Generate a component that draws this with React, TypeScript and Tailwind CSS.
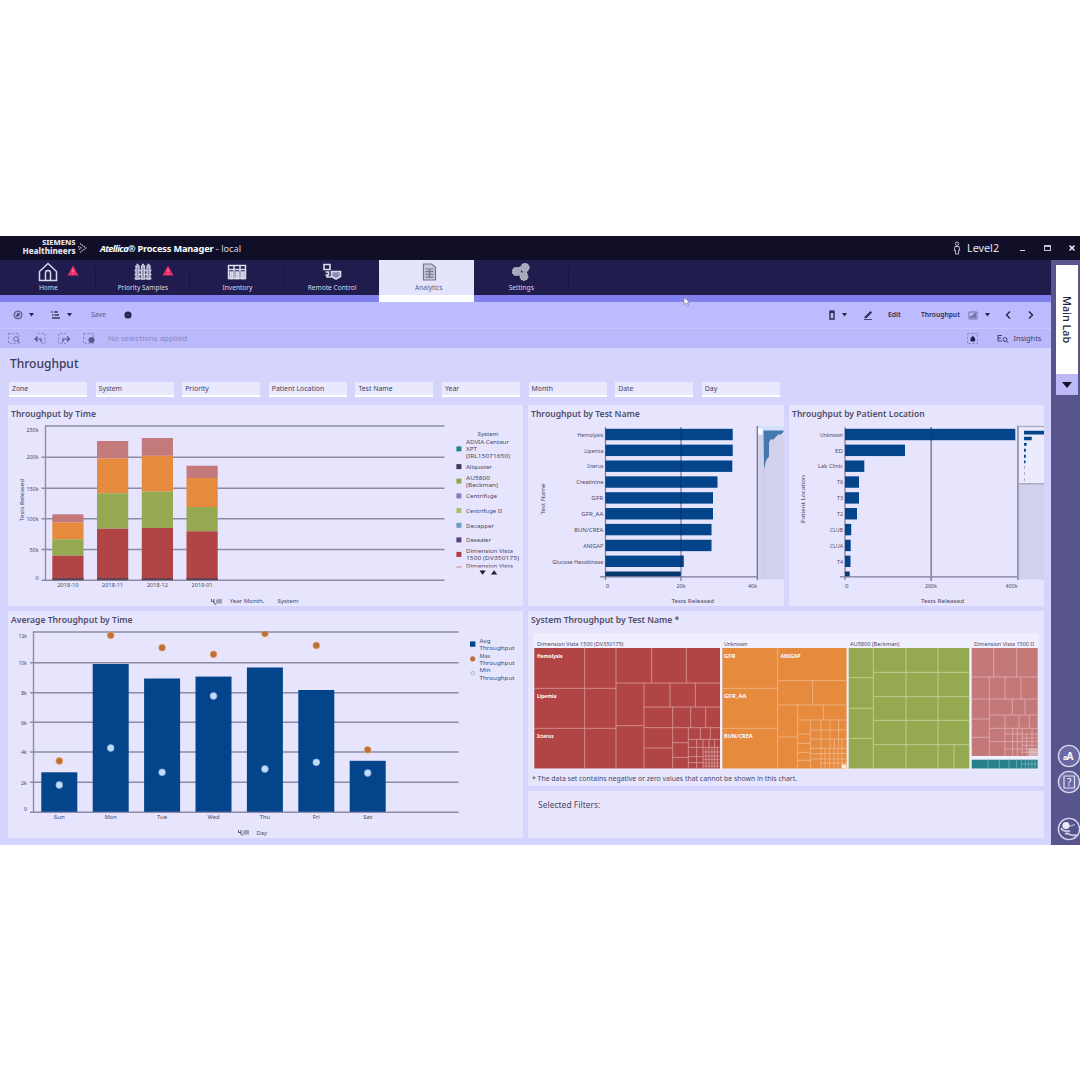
import React from "react";

const NAVY = "#04448a";
const INK = "#4a4865";

type LabelProps = {
  x: number;
  y: number;
  w?: number;
  size?: number;
  anchor?: "start" | "middle" | "end";
  fill?: string;
  weight?: number;
  rotate?: boolean;
  children: string;
};

function Label({ x, y, w, size = 5.6, anchor = "start", fill = INK, weight = 400, rotate, children }: LabelProps) {
  return (
    <text
      x={x}
      y={y}
      fontSize={size}
      textAnchor={anchor}
      fill={fill}
      fontWeight={weight}
      textLength={w}
      lengthAdjust="spacingAndGlyphs"
      transform={rotate ? `rotate(-90 ${x} ${y})` : undefined}
    >
      {children}
    </text>
  );
}

function Panel({ title, className, children }: { title?: string; className: string; children: React.ReactNode }) {
  return (
    <section className={`flex flex-col overflow-hidden bg-[#e6e5fd] ${className}`}>
      {title && (
        <h2 className="h-[18px] shrink-0 whitespace-nowrap pl-[3px] text-[8.6px] leading-[18.6px] font-semibold text-[#504e6a]">{title}</h2>
      )}
      {children}
    </section>
  );
}

/* ---------- Charts ---------- */

const stacks = [
  { x: 52.3, label: "2018-10", cuts: [514.3, 522.5, 539.3, 555.7] },
  { x: 97, label: "2018-11", cuts: [441, 458.5, 493.3, 528.7] },
  { x: 141.8, label: "2018-12", cuts: [438, 455.8, 491.5, 528] },
  { x: 186.5, label: "2019-01", cuts: [465.7, 478, 507, 531.3] },
];
const stackColors = ["#c47a7a", "#e68a3e", "#95aa50", "#b14545"];

const systemLegend: { y: number; color: string; lines: [string, number, number][] }[] = [
  { y: 448.8, color: "#2a8089", lines: [["ADVIA Centaur", 444.4, 43], ["XPT", 451.3, 11], ["(IRL15071650)", 458.2, 44]] },
  { y: 466.5, color: "#45355e", lines: [["Aliquoter", 468.9, 26]] },
  { y: 481, color: "#92aa4c", lines: [["AU5800", 480, 24], ["(Beckman)", 486.9, 32]] },
  { y: 495.8, color: "#9278bb", lines: [["Centrifuge", 498.2, 31]] },
  { y: 510.5, color: "#a2c267", lines: [["Centrifuge II", 512.9, 36]] },
  { y: 525.2, color: "#6d98c6", lines: [["Decapper", 527.6, 28]] },
  { y: 539.8, color: "#5b3e7c", lines: [["Desealer", 542.2, 25]] },
  { y: 554.3, color: "#b23b40", lines: [["Dimension Vista", 553.4, 47], ["1500 (DV350175)", 560.4, 53]] },
];

function ThroughputByTime() {
  const grid = [426, 457.2, 488.3, 518.8, 549.5, 580.3];
  const ticks = ["250k", "200k", "150k", "100k", "50k", "0"];
  return (
    <svg viewBox="8 423 515 183" className="h-[183px] w-[515px]">
      {grid.map((y, i) => (
        <g key={y}>
          <path d={`M${i ? 41.5 : 45} ${y}H444.5`} stroke="#8d8ba5" strokeWidth="1.4" />
          <Label x={38.5} y={i === 0 ? 432 : i === 5 ? 579.5 : y + 2.2} anchor="end" w={[12, 12, 12, 12, 9, 3][i]}>{ticks[i]}</Label>
        </g>
      ))}
      <path d="M45.5 425.5V580.5" stroke="#8d8ba5" strokeWidth="1.4" />
      {stacks.map((s) => (
        <g key={s.x}>
          {s.cuts.map((c, i) => (
            <rect key={c} x={s.x} y={c} width={31.2} height={(s.cuts[i + 1] ?? 580) - c} fill={stackColors[i]} />
          ))}
          <rect x={s.x} y={578} width={31.2} height={2.2} fill="#624454" />
          <Label x={s.x + 15.6} y={587.2} anchor="middle" w={21}>{s.label}</Label>
        </g>
      ))}
      <Label x={23.5} y={521} w={42} rotate>Tests Released</Label>
      <path d="M211.500 599v2.500h2.500M214 599v4.500l2 .8M217 599.5v4M219 599v4.500M221 599v4.500" stroke={INK} strokeWidth="0.9" fill="none" />
      <Label x={229.5} y={603.2} w={35}>Year Month,</Label>
      <Label x={277.5} y={603.2} w={21}>System</Label>
      <Label x={477.5} y={435.6} w={21}>System</Label>
      {systemLegend.map((l) => (
        <g key={l.y}>
          <rect x={456.4} y={l.y - 2.4} width={5} height={5} fill={l.color} />
          {l.lines.map(([t, y, w]) => (
            <Label key={t} x={466} y={y} w={w}>{t}</Label>
          ))}
        </g>
      ))}
      <path d="M456.5 567h5" stroke="#d08a92" strokeWidth="1.2" />
      <svg x="466" y="562.5" width="50" height="5" viewBox="466 562.5 50 5">
        <Label x={466} y={567.8} w={47}>Dimension Vista</Label>
      </svg>
      <path d="M479.5 570.5h6.2l-3.1 4.2zM491 574.5h6.2l-3.1-4.2z" fill="#1c1a35" />
    </svg>
  );
}

const days = [
  { d: "Sun", w: 11, top: 772.3, max: 761, min: 785 },
  { d: "Mon", w: 12, top: 664, max: 635.3, min: 748 },
  { d: "Tue", w: 10, top: 678.5, max: 647.7, min: 772.3 },
  { d: "Wed", w: 12, top: 676.6, max: 654.3, min: 696 },
  { d: "Thu", w: 10.5, top: 667.5, max: 633.5, min: 769 },
  { d: "Fri", w: 7, top: 690, max: 645.5, min: 762.3 },
  { d: "Sat", w: 9, top: 760.8, max: 749.8, min: 773 },
];

function AverageByTime() {
  const grid = [632, 662.7, 692.7, 722.3, 752, 782.3, 812.2];
  const ticks = ["12k", "10k", "8k", "6k", "4k", "2k", "0"];
  return (
    <svg viewBox="8 629 515 209" className="h-[209px] w-[515px]">
      <defs>
        <clipPath id="plot"><rect x="30" y="631.6" width="430" height="181" /></clipPath>
      </defs>
      {grid.map((y, i) => (
        <g key={y}>
          <path d={`M${i ? 30 : 33} ${y}H458.5`} stroke="#8d8ba5" strokeWidth="1.4" />
          <Label x={27} y={i === 0 ? 638 : i === 6 ? 811 : y + 2.2} anchor="end" w={i < 2 ? 8.5 : i === 6 ? 3 : 6}>{ticks[i]}</Label>
        </g>
      ))}
      <path d="M33.5 631.5V812.5" stroke="#8d8ba5" strokeWidth="1.4" />
      {days.map((b, i) => {
        const x = 41.3 + i * 51.4;
        return (
          <g key={b.d}>
            <rect x={x} y={b.top} width={36} height={811.8 - b.top} fill={NAVY} />
            <g clipPath="url(#plot)">
              <circle cx={x + 18} cy={b.max} r={3.4} fill="#b9713a" stroke="#eba864" strokeWidth="0.7" />
            </g>
            <circle cx={x + 18} cy={b.min} r={3.4} fill="#c4dcf8" stroke="#7fb0e8" strokeWidth="0.7" />
            <Label x={x + 18} y={819} anchor="middle" w={b.w}>{b.d}</Label>
          </g>
        );
      })}
      <path d="M238.500 830v2.500h2.500M241 830v4.500l2 .8M244 830.500v4M246 830v4.500M248 830v4.500" stroke={INK} strokeWidth="0.9" fill="none" />
      <Label x={256.5} y={834.5} w={10.5}>Day</Label>
      <rect x={470} y={641.4} width={5.4} height={5.4} fill={NAVY} />
      <circle cx={472.7} cy={658.8} r={2.6} fill="#b9713a" />
      <circle cx={472.7} cy={673.2} r={1.8} fill="#d5e4f8" stroke="#98a3c0" strokeWidth="0.7" />
      {["Avg", "Max", "Min"].map((t, i) => (
        <g key={t}>
          <Label x={479.5} y={643.1 + i * 14.6} w={11}>{t}</Label>
          <Label x={479.5} y={650.3 + i * 14.6} w={35}>Throughput</Label>
        </g>
      ))}
    </svg>
  );
}

const tests: [string, number, number][] = [
  ["Hemolysis", 732.7, 26],
  ["Lipemia", 732.7, 19],
  ["Icterus", 732.3, 16],
  ["Creatinine", 717.5, 27],
  ["GFR", 713, 12],
  ["GFR_AA", 713, 22],
  ["BUN/CREA", 711.5, 29],
  ["ANIGAP", 711.5, 20],
  ["Glucose Hexokinase", 683.8, 51],
];

function ByTestName() {
  return (
    <svg viewBox="528 423 256 183" className="h-[183px] w-[256px]">
      <path d="M605.5 427V580M681 427V581M600 576.8H758" stroke="#7c7a98" strokeWidth="1.2" />
      {tests.map(([t, x, w], i) => (
        <g key={t}>
          <rect x={605.3} y={428.8 + i * 15.85} width={x - 605.3} height={11.4} fill={NAVY} />
          <path d={`M681 ${428.8 + i * 15.85}v11.4`} stroke="#0c2c62" strokeWidth="0.8" />
          <Label x={603.3} y={436.7 + i * 15.85} anchor="end" w={w}>{t}</Label>
        </g>
      ))}
      <rect x={605.3} y={571.5} width={75.5} height={4.8} fill="#04386f" />
      <path d="M757.4 426V580" stroke="#7c7a98" strokeWidth="1.6" />
      <rect x={758.2} y={426} width={25.6} height={153.5} fill="#d2d1eb" />
      <rect x={758.2} y={426} width={25.6} height={9} fill="#d3e2f8" />
      <rect x={758.2} y={428.5} width={4} height={6} fill="#fff" />
      <path d="M763.5 430.5h20v1.5l-2.5 2.5h-3l-4.5 5h-3l-1.5 3v14l-3 4-2 9z" fill="#4578ae" />
      <path d="M763.5 468V578" stroke="#c6c5dd" strokeWidth="0.8" />
      <Label x={607.5} y={587.6} anchor="middle" w={3.5}>0</Label>
      <Label x={681} y={587.6} anchor="middle" w={9}>20k</Label>
      <Label x={752.5} y={587.6} anchor="middle" w={9}>40k</Label>
      <Label x={544.5} y={514.5} w={31} rotate>Test Name</Label>
      <Label x={671.5} y={603} w={42.5}>Tests Released</Label>
    </svg>
  );
}

const places: [string, number, number][] = [
  ["Unknown", 1015.3, 23],
  ["ED", 905, 8],
  ["Lab Clinic", 864.3, 25],
  ["T6", 859, 6],
  ["T3", 859, 6],
  ["T2", 857, 6],
  ["CLUB", 851.2, 13],
  ["CLUA", 850.7, 13],
  ["T4", 850.5, 6],
];

function ByPatientLocation() {
  return (
    <svg viewBox="789 423 255 183" className="h-[183px] w-[255px]">
      <path d="M845 427V580M840 576.8H1018" stroke="#7c7a98" strokeWidth="1.2" />
      <path d="M931.2 427V581" stroke="#8d8ba5" strokeWidth="1.8" />
      {places.map(([t, x, w], i) => (
        <g key={t}>
          <rect x={845} y={428.8 + i * 15.85} width={x - 845} height={11.4} fill={NAVY} />
          <Label x={843} y={436.7 + i * 15.85} anchor="end" w={w}>{t}</Label>
        </g>
      ))}
      <path d="M931.200 428.800v11.400" stroke="#0c3a76" strokeWidth="1" />
      <rect x={845} y={571.5} width={4.7} height={4.8} fill="#04386f" />
      <path d="M1018 425.5V580" stroke="#8d8ba5" strokeWidth="1.8" />
      <rect x={1018.8} y={425.5} width={25.2} height={58.5} fill="#ecebfd" />
      <rect x={1018.8} y={484} width={25.2} height={95.5} fill="#d2d1eb" />
      <path d="M1018 426.5h26M1018 483.8h26" stroke="#acaac6" strokeWidth="1.4" />
      <path d="M1024 430.8h20v3.6h-20zM1024 436.8h7.7v3.4h-7.7zM1024 443h2.6v2.8h-2.6zM1024 448.8h1.8v3h-1.8zM1024 454.8h1.8v3h-1.8zM1024 460.6h1.5v2.6h-1.5z" fill={NAVY} />
      <path d="M1024.5 466v16" stroke="#a9a8cc" strokeWidth="0.9" strokeDasharray="3 3" />
      <Label x={846.8} y={587.6} anchor="middle" w={3.5}>0</Label>
      <Label x={931} y={587.6} anchor="middle" w={12}>200k</Label>
      <Label x={1011.5} y={587.6} anchor="middle" w={12}>400k</Label>
      <Label x={805} y={523} w={48} rotate>Patient Location</Label>
      <Label x={921} y={603} w={43}>Tests Released</Label>
    </svg>
  );
}

/* Cell borders are laid out in thirds of a pixel from each group's origin. */
function Treemap() {
  return (
    <svg viewBox="528 629 516 157" className="h-[157px] w-[516px]">
      <rect x={533.5} y={633.5} width={505} height={136} fill="#f0effe" />
      <rect x={534.3} y={648} width={185.7} height={120.5} fill="#b14545" />
      <rect x={722.3} y={648} width={124.3} height={120.5} fill="#e68a3e" />
      <rect x={848.7} y={648} width={120.6} height={120.5} fill="#95aa50" />
      <rect x={971.7} y={648} width={66} height={108} fill="#c47878" />
      <rect x={971.7} y={759.7} width={66} height={8.8} fill="#27818c" />
      <g fill="none" strokeWidth="2.4">
        <g transform="translate(525 605) scale(.33333)">
          <path
            stroke="#d79d9e"
            d="M179 128V490M273 128V490M28 250H273M28 370H273M273 234H585M380 128V234M484 128V234M357 234V490M273 362H357M357 306H585M435 234V306M511 234V306M357 368H585M443 306V490M497 306V368M542 306V368M357 429H443M443 413H490M443 457H490M490 368V490M490 403H585M526 368V403M556 368V403M515 403V490M534 403V490M552 403V490M569 403V490M490 427H585M490 455H534M490 473H534M534 441H585M534 453H585M534 464H585M534 474H585M534 483H585M543 427V490M561 427V490M577 427V490"
          />
        </g>
        <g transform="translate(715 605) scale(.33333)">
          <path
            stroke="#f1bb8b"
            d="M188 128V490M22 250H188M22 370H188M188 227H395M293 227V300M188 300H395M248 300V490M188 396H248M325 300V345M248 345H395M286 345V490M318 345V490M345 345V430M371 345V430M286 375H395M286 402H395M248 387H286M248 415H286M248 442H286M248 466H286M286 430H395M286 446H395M286 462H395M318 474H395M330 430V490M344 430V490M357 430V490M369 430V490M381 402V490M358 402V430"
          />
          <path stroke="#c8d5a0" d="M475 128V490M401 218H475M401 310H475M401 400H475M573 128V490M475 202H763M475 275H763M475 346H763M475 419H763M669 128V490M717 419V490" />
          <path fill="#fdeee0" d="M380 478h14v12h-14z" />
        </g>
        <g transform="translate(900 605) scale(.33333)">
          <path
            stroke="#e0b0b4"
            d="M215 216H413M281 128V216M350 128V216M268 216V453M315 216V282M363 216V282M215 282H413M337 282V330M375 282V330M268 330H413M215 342H268M215 397H268M315 330V453M357 330V370M388 330V370M268 370H413M268 410H315M315 387H413M315 410H413M315 432H413M338 370V453M352 370V453M366 370V453M380 387V453M396 370V453M366 399H413M366 421H413M366 442H413"
          />
          <path fill="#e8cccf" fillOpacity="0.6" d="M385 430h28v23h-28z" />
          <path stroke="#74b3ba" d="M264 464V490M298 464V490M327 464V490M350 464V490M364 464V490M376 464V490M386 464V490M396 464V490M405 464V490M364 477H413" />
        </g>
      </g>
      <Label x={537} y={645.6} w={86.5}>Dimension Vista 1500 (DV350175)</Label>
      <Label x={724} y={645.6} w={23.5}>Unknown</Label>
      <Label x={850} y={645.6} w={49.5}>AU5800 (Beckman)</Label>
      <Label x={974} y={645.6} w={60}>Dimension Vista 1500 II</Label>
      <g>
        <Label x={537} y={657.6} w={25.5} fill="#fff" weight={700}>Hemolysis</Label>
        <Label x={537} y={697.6} w={19.5} fill="#fff" weight={700}>Lipemia</Label>
        <Label x={537} y={738} w={16.5} fill="#fff" weight={700}>Icterus</Label>
        <Label x={724} y={657.6} w={11.5} fill="#fff" weight={700}>GFR</Label>
        <Label x={724} y={697.6} w={22.5} fill="#fff" weight={700}>GFR_AA</Label>
        <Label x={724} y={738} w={28.5} fill="#fff" weight={700}>BUN/CREA</Label>
        <Label x={780.5} y={657.6} w={20} fill="#fff" weight={700}>ANIGAP</Label>
      </g>
      <Label x={532} y={781} w={265} size={7.4}>* The data set contains negative or zero values that cannot be shown in this chart.</Label>
    </svg>
  );
}

/* ---------- Navigation ---------- */

const navIcons: Record<string, React.ReactNode> = {
  Home: <path d="M1.5 9.5 10 1.5l8.5 8v9h-17zM7.5 18.5v-7.5a2.5 2.5 0 0 1 5 0v7.5" fill="none" stroke="#d8d7ea" strokeWidth="1.5" />,
  "Priority Samples": (
    <g fill="none" stroke="#cfcee4" strokeWidth="1.3">
      <path d="M1.5 8.5h17M1.5 12.5h17M1.5 16.5h17" />
      <path d="M3 4h3v13H3zM8.5 4h3v13h-3zM14 4h3v13h-3z" fill="#9694b5" />
      <path d="M3.5 2.5h2M9 2.5h2M14.5 2.5h2" />
    </g>
  ),
  Inventory: (
    <g fill="none" stroke="#dddced" strokeWidth="1.5">
      <path d="M1.500 3.500h17v13h-17zM1.500 7.500h17M7 3.500v13M13 3.500v13" />
      <path d="M3.200 10h2.200v6.500H3.200zM9 10h2.200v6.500H9zM14.800 10H17v6.500h-2.200z" fill="#c3c2da" />
    </g>
  ),
  "Remote Control": (
    <g fill="none" stroke="#dcdbec" strokeWidth="1.6">
      <path d="M2 2.500h6v5H2zM3.500 10h3v3h-3M5 13v2h4" />
      <path d="M9.500 9.500h9v5l-4.500 2.500-4.500-2.500z" fill="#8e8bb2" />
    </g>
  ),
  Analytics: (
    <g stroke="#77758f" strokeWidth="1.2">
      <path d="M4.500 2h8l4 3v13h-12z" fill="#c9c7de" />
      <path d="M6.500 7h8M6.500 9.700h8M6.500 12.400h8M6.500 15.100h8M10.500 7v9" />
    </g>
  ),
  Settings: (
    <g fill="#a9a7bb" stroke="#bebccf" strokeWidth="1.2" strokeDasharray="1.8 0.7">
      <circle cx="5.500" cy="9.500" r="4" />
      <circle cx="14" cy="5.500" r="4" />
      <circle cx="13" cy="14.500" r="3.800" />
      <path d="M6 8l7-3M6 10l7 4M14 6v8" strokeWidth="4" strokeDasharray="none" stroke="#a9a7bb" />
    </g>
  ),
};

function NavTab({ name, alert, active }: { name: string; alert?: boolean; active?: boolean }) {
  return (
    <div
      className={
        "relative flex w-[94.6px] shrink-0 flex-col items-center border-b-[7px] pt-[2px] " +
        (active ? "border-white bg-[#e5e4fd] pl-[4px] text-[#5d5b76]" : "border-[#8180ec] text-[#dddcec]")
      }
    >
      <svg viewBox="0 0 20 20" className="h-[20px] w-[20px]">{navIcons[name]}</svg>
      <span className="text-[6.600px] leading-[11px] whitespace-nowrap">{name}</span>
      {alert && (
        <svg viewBox="0 0 12 11" className="absolute top-[4.500px] right-[16.500px] h-[11px] w-[12px]">
          <path d="M6 .5 11.500 10.500H.5z" fill="#ec2d69" />
          <path d="M6 4v3M6 8v1.200" stroke="#ffb3cb" strokeWidth="0.900" />
        </svg>
      )}
      {!active && <i className="absolute top-[7px] right-0 h-[22px] w-px bg-[#17143f]" />}
    </div>
  );
}

function Caret() {
  return (
    <svg viewBox="0 0 6 4" className="h-[3.500px] w-[5px]">
      <path d="M0 0h6L3 4z" fill="#26244a" />
    </svg>
  );
}

function Toolbar() {
  return (
    <div className="flex h-[26px] items-center bg-[#bcbbfd] text-[#2f2d55]">
      <svg viewBox="0 0 10 10" className="ml-[13px] h-[10px] w-[10px]">
        <circle cx="5" cy="5" r="4" fill="#a3a2e0" stroke="#56547f" />
        <path d="M3 7l1.200-3L7 3 5.800 5.800z" fill="#3a3860" />
      </svg>
      <span className="ml-[6px] flex"><Caret /></span>
      <svg viewBox="0 0 9 8" className="ml-[17px] h-[8px] w-[9px]">
        <path d="M0 1h1.500M3 1h4M1 4h1.500M3.500 4H8M1 7h8" stroke="#3a3860" strokeWidth="1.300" />
      </svg>
      <span className="ml-[7px] flex"><Caret /></span>
      <span className="ml-[19px] w-[16px] text-[6.800px] text-[#5b598a]">Save</span>
      <svg viewBox="0 0 8 8" className="ml-[16.500px] h-[8px] w-[8px]">
        <circle cx="4" cy="4" r="3.600" fill="#25234a" />
        <path d="M1.800 4h4.400" stroke="#5a588c" strokeWidth="0.800" />
      </svg>
      <div className="flex-1" />
      <svg viewBox="0 0 8 10" className="h-[10px] w-[8px]">
        <path d="M2 1.300h4V9H2zM2 2.200h4" fill="none" stroke="#2c2a50" strokeWidth="1.400" />
      </svg>
      <span className="ml-[6px] flex"><Caret /></span>
      <svg viewBox="0 0 10 10" className="ml-[16px] h-[10px] w-[10px]">
        <path d="M1 7.500 7.500 1l1.500 1.500L3 8.500z" fill="#2c2a50" />
        <path d="M1 9.500h8" stroke="#2c2a50" strokeWidth="0.800" />
      </svg>
      <span className="ml-[15px] w-[14px] text-[6.800px] font-semibold">Edit</span>
      <span className="ml-[19px] w-[39px] whitespace-nowrap text-[6.700px] font-semibold">Throughput</span>
      <svg viewBox="0 0 10 9" className="ml-[7.500px] h-[9px] w-[10px]">
        <path d="M1 1h8v7H1z" fill="none" stroke="#6a689c" strokeWidth="0.900" />
        <path d="M3 7V5M5 7V3.500M7 7V2" stroke="#3f3d6c" strokeWidth="1.100" />
      </svg>
      <span className="ml-[7px] flex"><Caret /></span>
      <svg viewBox="0 0 6 8" className="ml-[15px] h-[8px] w-[6px]">
        <path d="M5 .5 1.500 4 5 7.500" fill="none" stroke="#25234a" strokeWidth="1.400" />
      </svg>
      <svg viewBox="0 0 6 8" className="mr-[17.500px] ml-[17px] h-[8px] w-[6px]">
        <path d="M1 .5 4.500 4 1 7.500" fill="none" stroke="#25234a" strokeWidth="1.400" />
      </svg>
    </div>
  );
}

function SelectionBar() {
  const frame = <path d="M.6.600h10v9.800H.6z" fill="none" stroke="#7f7eb4" strokeWidth="0.900" strokeDasharray="2.200 1.600" />;
  return (
    <div className="flex h-[20px] items-center border-t border-[#c9c8fe] bg-[#bab9fc]">
      <svg viewBox="0 0 13 11" className="ml-[8px] h-[11px] w-[13px]">
        {frame}
        <circle cx="8" cy="6" r="2.300" fill="#bab9fc" stroke="#6b699e" />
        <path d="M9.700 7.700 12 10" stroke="#6b699e" />
      </svg>
      <svg viewBox="0 0 13 11" className="ml-[12px] h-[11px] w-[13px]">
        <path d="M4.500.600H12v9.800H8" fill="none" stroke="#7f7eb4" strokeWidth="0.900" strokeDasharray="2.200 1.600" />
        <path d="M8 9V6H2.500M4.500 3.500 2 6l2.500 2.500" fill="none" stroke="#55537f" strokeWidth="1.200" />
      </svg>
      <svg viewBox="0 0 13 11" className="ml-[12px] h-[11px] w-[13px]">
        <path d="M8 .600H.6v9.800H8" fill="none" stroke="#7f7eb4" strokeWidth="0.900" strokeDasharray="2.200 1.600" />
        <path d="M5 9V6h6M9 3.500 11.500 6 9 8.500" fill="none" stroke="#55537f" strokeWidth="1.200" />
      </svg>
      <svg viewBox="0 0 13 11" className="ml-[12px] h-[11px] w-[13px]">
        {frame}
        <circle cx="8.500" cy="7" r="3" fill="#5c5a8a" />
      </svg>
      <span className="ml-[12px] whitespace-nowrap text-[7.900px] text-[#8a88c0]">No selections applied</span>
      <div className="flex-1" />
      <svg viewBox="0 0 11 11" className="h-[11px] w-[11px]">
        {frame}
        <path d="M4 8V5.500L5.800 3.300 7.600 5.500V8z" fill="#201e44" stroke="#201e44" />
      </svg>
      <svg viewBox="0 0 12 9" className="ml-[19px] h-[9px] w-[12px]">
        <path d="M1 1v6M1 1.500h4M1 4h3M1 7h4" fill="none" stroke="#45436f" />
        <circle cx="8" cy="5.500" r="2" fill="none" stroke="#45436f" />
        <path d="M9.300 7 11.500 9" stroke="#45436f" />
      </svg>
      <span className="mr-[9.500px] ml-[5px] w-[28px] whitespace-nowrap text-[7.400px] text-[#3f3d66]">Insights</span>
    </div>
  );
}

const filters = ["Zone", "System", "Priority", "Patient Location", "Test Name", "Year", "Month", "Date", "Day"];

function SideRail() {
  return (
    <aside className="flex w-[29px] shrink-0 flex-col items-center overflow-hidden bg-[#57548e] pt-[5px] pl-[2px]">
      <div className="flex h-[109px] w-[22px] shrink-0 items-center justify-center bg-white">
        <span className="text-[10.800px] font-medium whitespace-nowrap text-[#25243a] [writing-mode:vertical-rl]">Main Lab</span>
      </div>
      <div className="flex h-[21px] w-[22px] shrink-0 items-center justify-center bg-[#bdb9f6]">
        <svg viewBox="0 0 10 6" className="h-[6px] w-[10px]"><path d="M0 0h10L5 6z" fill="#14122e" /></svg>
      </div>
      <div className="mt-[349px] ml-[4px] flex flex-col">
        <svg viewBox="0 0 24 24" className="h-[24px] w-[24px]">
          <circle cx="12" cy="12" r="10.600" fill="#6b69a3" stroke="#d6d5ea" strokeWidth="1.400" />
          <text x="6" y="15.500" fontSize="7" fontWeight="700" fill="#fff">a</text>
          <text x="9.500" y="15.500" fontSize="10" fontWeight="700" fill="#fff">A</text>
        </svg>
        <svg viewBox="0 0 24 24" className="mt-[2px] h-[24px] w-[24px]">
          <circle cx="12" cy="12" r="10.600" fill="#6b69a3" stroke="#d6d5ea" strokeWidth="1.400" />
          <path d="M7 6h10.500v12H7z" fill="none" stroke="#e3e2f2" strokeWidth="1.200" />
          <text x="10" y="15.800" fontSize="10" fill="#fff">?</text>
        </svg>
        <svg viewBox="0 0 24 24" className="mt-[23px] h-[24px] w-[24px]">
          <circle cx="12" cy="12" r="10.600" fill="#55528c" stroke="#d6d5ea" strokeWidth="1.400" />
          <circle cx="9" cy="8.500" r="3.600" fill="#eceaf6" />
          <path d="M4 11c2 4 6 3.500 9 3M8 17c3-2 6 3 12 1" stroke="#c5c3dd" strokeWidth="2" fill="none" />
          <path d="M12 9.500l6-2" stroke="#c5c3dd" strokeWidth="1.300" />
        </svg>
      </div>
    </aside>
  );
}

export default function App() {
  return (
    <div className="flex h-[1080px] w-[1080px] flex-col overflow-hidden bg-white pt-[236px] font-['Noto_Sans','Open_Sans',sans-serif]">
      <header className="flex h-[24px] shrink-0 items-center bg-[#100f27] text-white">
        <div className="w-[75.500px] text-right text-[8.100px] leading-[8.500px] font-extrabold whitespace-nowrap text-[#e5e4ee]">
          <div className="-mt-[3px] text-[7.600px]">SIEMENS</div>
          <div>Healthineers</div>
        </div>
        <svg viewBox="0 0 10 12" className="ml-[1.500px] h-[12px] w-[10px]">
          <path d="M3 1.500 9 6l-6 4.500M1 4.500 4 6 1 8" fill="none" stroke="#b5b3c6" strokeWidth="1.300" strokeDasharray="1.500 0.800" />
        </svg>
        <div className="ml-[13px] pt-[1px] text-[9.200px] whitespace-nowrap">
          <b className="tracking-[-0.600px] italic">Atellica®</b> <b className="tracking-[-0.150px]">Process Manager</b>
          <span className="text-[#d6d5e4]"> - local</span>
        </div>
        <div className="flex-1" />
        <svg viewBox="0 0 8 14" className="h-[14px] w-[8px]">
          <path d="M4 1a1.600 1.600 0 0 1 0 3.400A1.600 1.600 0 0 1 4 1M2 5.500h4l.8 4H5.500V13h-3V9.500H1.200z" fill="none" stroke="#bbb9ca" />
        </svg>
        <span className="ml-[6.500px] w-[32px] text-[10.800px] text-[#e6e5f0]">Level2</span>
        <i className="mt-[5px] ml-[21px] h-[1.500px] w-[5px] bg-[#d8d7e6]" />
        <i className="ml-[19px] h-[6px] w-[7px] border border-t-2 border-[#c6c5d6]" />
        <svg viewBox="0 0 6 6" className="mr-[5px] ml-[18px] h-[6px] w-[6px]">
          <path d="M.5.500l5 5M5.500.500l-5 5" stroke="#fff" strokeWidth="1.400" />
        </svg>
      </header>

      <div className="flex h-[585px] shrink-0">
        <main className="flex w-[1051px] shrink-0 flex-col bg-[#d5d4fc]">
          <nav className="relative flex h-[42px] shrink-0 bg-[#201d4e]">
            <i className="w-px shrink-0 border-b-[7px] border-[#8180ec]" />
            <NavTab name="Home" alert />
            <NavTab name="Priority Samples" alert />
            <NavTab name="Inventory" />
            <NavTab name="Remote Control" />
            <NavTab name="Analytics" active />
            <NavTab name="Settings" />
            <div className="flex-1 border-b-[7px] border-[#8180ec]" />
            <svg viewBox="0 0 8 10" className="absolute top-[37px] left-[683px] h-[10px] w-[8px]">
              <path d="M1 .5v7l1.800-1.500L4 9l1.500-.6-1.200-2.800L7 5.500z" fill="#fff" stroke="#77759a" strokeWidth="0.700" />
            </svg>
          </nav>
          <Toolbar />
          <SelectionBar />
          <h1 className="h-[34px] shrink-0 pl-[10px] text-[12px] leading-[32px] font-medium text-[#3b3958]">Throughput</h1>
          <div className="flex h-[15px] shrink-0 gap-[8.600px] pl-[9px]">
            {filters.map((f) => (
              <div key={f} className="w-[78px] border-b-2 border-white bg-[#e9e8fd] pl-[3px] text-[6.900px] leading-[13px] whitespace-nowrap text-[#45435f]">
                {f}
              </div>
            ))}
          </div>
          <div className="mt-[8px] flex gap-[5px] pl-[8px]">
            <div className="flex w-[515px] flex-col gap-[5px]">
              <Panel title="Throughput by Time" className="h-[201px]"><ThroughputByTime /></Panel>
              <Panel title="Average Throughput by Time" className="h-[227px]"><AverageByTime /></Panel>
            </div>
            <div className="flex w-[516px] flex-col gap-[5px]">
              <div className="flex gap-[5px]">
                <Panel title="Throughput by Test Name" className="h-[201px] w-[256px]"><ByTestName /></Panel>
                <Panel title="Throughput by Patient Location" className="h-[201px] w-[255px]"><ByPatientLocation /></Panel>
              </div>
              <Panel title="System Throughput by Test Name *" className="h-[175px]"><Treemap /></Panel>
              <Panel className="h-[47px]">
                <p className="pt-[7.500px] pl-[10px] text-[8.500px] leading-[12px] text-[#4a4865]">Selected Filters:</p>
              </Panel>
            </div>
          </div>
        </main>
        <SideRail />
      </div>
    </div>
  );
}
